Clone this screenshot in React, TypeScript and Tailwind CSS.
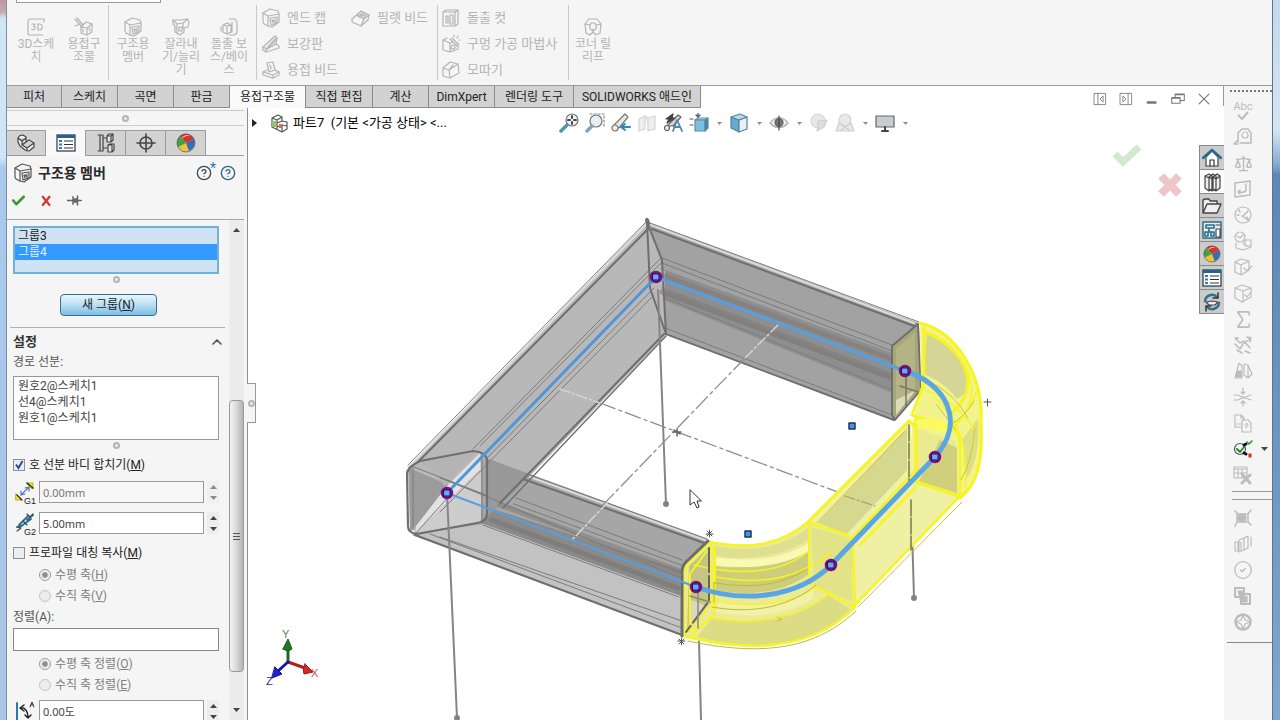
// App.tsx

import type { ReactNode } from "react";
import {
  ChevronUp,
  CircleCheck,
  CircleHelp,
  Scale,
  Sigma,
} from "lucide-react";
import clsx from "clsx";

const Svg = ({ size = 20, children }: { size?: number; children: ReactNode }) => (
  <svg
    width={size}
    height={size}
    viewBox="0 0 20 20"
    fill="none"
    stroke="currentColor"
    strokeWidth="1.2"
    strokeLinejoin="round"
    strokeLinecap="round"
    aria-hidden="true"
    className="shrink-0"
  >
    {children}
  </svg>
);

/* ---------- ribbon icons ---------- */

const Sketch3DIcon = () => (
  <Svg>
    <path d="M18 5v-3H4a2 2 0 0 0-2 2v12a2 2 0 0 0 2 2h13" />
    <path d="M6 7h3l-1.500 2.500c3 0 2 4-2 3M12 7v6h1.500c3.500 0 3.500-6 0-6z" />
  </Svg>
);

const TubeIcon = ({ size = 20 }: { size?: number }) => (
  <Svg size={size}>
    <path d="M2 5l7-4 8 2 1 3v8l-7 5-4-1-4-2-1-2z" />
    <path d="M2 5l5 3 11-2M7 8v10" />
    <path d="M9 10l7-1v6l-6 2zM11 12l1 3M14 11v4M12 12l2 2" />
  </Svg>
);

const WeldmentIcon = () => (
  <Svg>
    <path d="M1 2l7 8M3 1l6 7M1 9l5-2M7 10l5-5 6 2v8l-5 3-6-2z" />
    <path d="M7 10l6 1 5-4M13 11v7M9 12v3M15 11l1 3" />
  </Svg>
);

const TrimIcon = () => (
  <Svg>
    <path d="M2 3h8l6-1 2 3-1 5-4 1v4l-4 3-5-3V9L2 7z" />
    <path d="M2 3l4 4 6-1 5-4M6 7v9M12 6v5M8 10h3v4H8z" />
  </Svg>
);

const BossIcon = () => (
  <Svg>
    <path d="M10 2h6l2 3v11l-3 2h-5" />
    <path d="M4 8l4-2 4 2v7l-4 2-4-2zM4 8l4 1 4-1M8 9v8M2 10v4M13 5v10" />
  </Svg>
);

const WedgeIcon = () => (
  <Svg>
    <path d="M2 13L14 2l2 2-1 6 3 2v2L5 18l-3-2z" />
    <path d="M2 13l4 2 9-5M6 15l10-11M5 18v-3" />
    <path d="M6 13l8-9v5z" fill="currentColor" opacity="0.5" />
  </Svg>
);

const BeadIcon = () => (
  <Svg>
    <path d="M6 3l6-1 2 8-6 2zM2 12l4-2M8 12l6-2 4 2v3l-6 3-10-3v-3" />
    <path d="M2 12l10 3 6-3M12 15v3M9 5l1 4" />
  </Svg>
);

const FilletIcon = () => (
  <Svg>
    <path d="M1 11l9-8 8 4-1 5-7 6-9-4z" />
    <path d="M6 7l7 4 5-4M10 18l3-7M8 9c2-3 4-3 6-1" />
    <path d="M6 8l5-4 5 3-4 3z" fill="currentColor" opacity="0.5" />
  </Svg>
);

const CutIcon = () => (
  <Svg>
    <path d="M2 4l3-2h12v14l-3 2H2zM2 4h12l3-2M14 4v14" />
    <path d="M5 8h2v7H5zM9 7h3v9H9z" />
  </Svg>
);

const HoleIcon = () => (
  <Svg>
    <path d="M2 6l4-2M2 6v10l7 2 8-3V9M2 6l7 3v9M9 9l3-1" />
    <path d="M9 5l7 7M11 4l6 6M13 1v2M17 2l-1 2M18 6h1" />
    <circle cx="12" cy="13" r="2" />
  </Svg>
);

const ChamferIcon = () => (
  <Svg>
    <path d="M2 8l7-6 8 2 1 9-9 5-7-2zM2 8l6 2 9-6M8 10l1 8M8 10l4-5" />
  </Svg>
);

const CornerIcon = () => (
  <Svg>
    <path d="M6 2h8l4 5-1 9-4 2-3-3-3 3-4-2-1-9z" />
    <path d="M2 7l5 1 1-2h4l1 2 5-1M10 15v-3M7 8v4l3 2 3-2V8" />
  </Svg>
);

/* ---------- ribbon ---------- */

const BigButton = ({ icon, label }: { icon: ReactNode; label: string }) => (
  <button className="flex w-12 flex-col items-center gap-px pt-[17px]">
    {icon}
    <span className="whitespace-pre text-center text-[12px] leading-[13px]">{label}</span>
  </button>
);

const SmallButton = ({ icon, label }: { icon: ReactNode; label: string }) => (
  <button className="flex h-[26px] items-center gap-1.5 whitespace-nowrap text-[13px]">
    {icon}
    {label}
  </button>
);

const RibbonDivider = () => <div className="my-[5px] w-px shrink-0 bg-[#c9c9c9]" />;

const Ribbon = () => (
  <header className="relative h-[86px] shrink-0 border-b border-[#9a9a9a] bg-[#f5f5f5] text-[#b4b4b4]">
    <div className="absolute left-[9px] top-0 h-[3px] w-[145px] border-x border-b border-[#999] bg-white" />
    <div className="flex h-full">
      <div className="flex pl-[5px]">
        <BigButton icon={<Sketch3DIcon />} label={"3D스케\n치"} />
        <BigButton icon={<WeldmentIcon />} label={"용접구\n조물"} />
      </div>
      <RibbonDivider />
      <div className="flex pr-[3px]">
        <BigButton icon={<TubeIcon />} label={"구조용\n멤버"} />
        <BigButton icon={<TrimIcon />} label={"잘라내\n기/늘리\n기"} />
        <BigButton icon={<BossIcon />} label={"돌출 보\n스/베이\n스"} />
      </div>
      <RibbonDivider />
      <div className="grid w-[180px] grid-cols-[90px_90px] pl-1 pt-[5px]">
        <div>
          <SmallButton icon={<TubeIcon />} label="엔드 캡" />
          <SmallButton icon={<WedgeIcon />} label="보강판" />
          <SmallButton icon={<BeadIcon />} label="용접 비드" />
        </div>
        <div>
          <SmallButton icon={<FilletIcon />} label="필렛 비드" />
        </div>
      </div>
      <RibbonDivider />
      <div className="w-[130px] pl-[3px] pt-[5px]">
        <SmallButton icon={<CutIcon />} label="돌출 컷" />
        <SmallButton icon={<HoleIcon />} label="구멍 가공 마법사" />
        <SmallButton icon={<ChamferIcon />} label="모따기" />
      </div>
      <RibbonDivider />
      <BigButton icon={<CornerIcon />} label={"코너 릴\n리프"} />
    </div>
  </header>
);

/* ---------- command tabs + window buttons ---------- */

const TABS = [
  { label: "피처", width: "w-[55px]" },
  { label: "스케치", width: "w-[56px]" },
  { label: "곡면", width: "w-[56px]" },
  { label: "판금", width: "w-[56px]" },
  { label: "용접구조물", width: "w-[76px]", active: true },
  { label: "직접 편집", width: "w-[67px]" },
  { label: "계산", width: "w-[56px]" },
  { label: "DimXpert", width: "w-[66px]" },
  { label: "렌더링 도구", width: "w-[79px]" },
  { label: "SOLIDWORKS 애드인", width: "w-[127px]" },
];

const WINDOW_BUTTONS = [
  { name: "왼쪽 창", shape: <path d="M2 2h16v16H2zM7 2v16M14 6l-4 4 4 4z" /> },
  { name: "오른쪽 창", shape: <path d="M2 2h16v16H2zM13 2v16M6 6l4 4-4 4z" /> },
  { name: "최소화", shape: <path strokeWidth="3.500" d="M4 15h11" /> },
  { name: "복원", shape: <path strokeWidth="1.500" d="M1 8h12v8H1zM6 8V3h13v9h-6M6 4h13M1 9h12" /> },
  { name: "닫기", shape: <path d="M3 3l14 14M17 3L3 17" strokeWidth="1.500" /> },
];

const CommandTabs = () => (
  <nav className="flex h-[22px] shrink-0 bg-white">
    {TABS.map((tab) => (
      <button
        key={tab.label}
        className={clsx(
          "whitespace-nowrap border-r border-[#8c8c8c] text-center text-[12px] leading-5 text-[#222]",
          tab.width,
          tab.active ? "bg-[#fafafa]" : "border-b bg-[#d2d2d2]",
        )}
      >
        {tab.label}
      </button>
    ))}
    <div className="ml-auto flex h-5 items-end border-r border-[#999] pr-1.5 text-[#777]">
      {WINDOW_BUTTONS.map((button) => (
        <button key={button.name} aria-label={button.name} className="flex h-4 w-[26px] items-end justify-center">
          <Svg size={14}>{button.shape}</Svg>
        </button>
      ))}
    </div>
  </nav>
);

/* ---------- property manager ---------- */

const ColorBall = ({ size = 20 }: { size?: number }) => (
  <svg width={size} height={size} viewBox="0 0 20 20" aria-hidden="true">
    <circle cx="10" cy="10" r="9" fill="#f2c230" />
    <path d="M10 10L4 3a9 9 0 0 1 14 3z" fill="#d8322c" />
    <path d="M10 10l8-4a9 9 0 0 1-5 12z" fill="#2f6fc2" />
    <path d="M10 10L4 3a9 9 0 0 0-2 11z" fill="#3fa14a" />
    <path d="M5 6c2-4 7-5 9-3-3-1-6 1-9 3z" fill="#fff" opacity="0.7" />
    <circle cx="10" cy="10" r="9" fill="none" stroke="#555" strokeWidth="0.700" />
  </svg>
);

const PropertyListIcon = ({ size = 20 }: { size?: number }) => (
  <svg width={size} height={size} viewBox="0 0 20 20" fill="none" aria-hidden="true">
    <rect x="1" y="2" width="18" height="16" fill="#fff" stroke="#345" strokeWidth="1.300" />
    <path d="M1 3.500h18" stroke="#24648f" strokeWidth="3" />
    <path d="M3 8h3M3 11.500h3M3 15h3" stroke="#2a7bb0" strokeWidth="2" />
    <path d="M8 8h9M8 11.500h9M8 15h9" stroke="#333" strokeWidth="1.200" />
  </svg>
);

const PANEL_TABS = [
  {
    name: "디자인 트리",
    icon: (
      <Svg>
        <path
          d="M2 5q1-3 5-3l3 2v5l3-2 5 3v4l-5 4-4-1-5-4-2-4zM2 5l4 3 4-3M6 8v4l5 3 7-5M11 15v3M6 12l4-3"
          fill="#eee"
        />
      </Svg>
    ),
  },
  { name: "속성", icon: <PropertyListIcon /> },
  {
    name: "설정",
    icon: (
      <Svg>
        <path d="M2 2h5M4 2v16M2 18h5M7 2v16M7 5h4M7 15h4" />
        <path d="M11 3l2-2h4v6l-2 2h-4zM11 3h4v6M15 3l2-2M12 12l2-1h4v6l-2 2h-4zM12 12h4v7" fill="#e5e5e5" />
      </Svg>
    ),
  },
  {
    name: "치수",
    icon: (
      <Svg>
        <circle cx="10" cy="10" r="6" strokeWidth="1.600" />
        <path strokeWidth="1.600" d="M10 1v18M1 10h18" />
      </Svg>
    ),
  },
  { name: "표시", icon: <ColorBall /> },
];

const Knob = () => (
  <span className="h-[7px] w-[7px] rounded-full border-2 border-[#b5b5b5] bg-[#eee]" />
);

const KnobRow = () => (
  <div className="flex h-2.5 w-[206px] items-center justify-center">
    <Knob />
  </div>
);

const Tri = ({ down = false }: { down?: boolean }) => (
  <svg width="7" height="4" viewBox="0 0 7 4" aria-hidden="true">
    <path d={down ? "M0 0h7L3.500 4z" : "M0 4h7L3.500 0z"} fill="#444" />
  </svg>
);

const Gap1Icon = () => (
  <Svg>
    <path d="M6 13l8-8M6 13v-4M6 13l4-1M14 5v4M14 5l-4 1" stroke="#5578b8" />
    <path d="M12 1h6v6h-1l-5-5zM1 12l6 6H1z" fill="#f5e52a" stroke="#a89b10" strokeWidth="0.800" />
    <path d="M2 13l5 5M12 1l6 5" stroke="#222" />
  </Svg>
);

const Gap2Icon = () => (
  <Svg>
    <path d="M4 12l9-9M5 14l11-8M2 14l6-2M12 7l6-5" stroke="#22708f" strokeWidth="1.800" />
    <path d="M2 18l4-3-4-1M12 1l3 3 3-3M8 8l4 4" stroke="#444" />
  </Svg>
);

const AngleIcon = () => (
  <Svg>
    <path d="M2 2v17" stroke="#2879ad" strokeWidth="2" />
    <path d="M5 7c6-1 8 4 8 10M5 7l4-3M5 7l4 3M13 17l-3-3M13 17l3-3" stroke="#222" strokeWidth="1.500" />
    <path d="M15 6l2-5 2 5M16 4h2" stroke="#222" strokeWidth="0.900" />
  </Svg>
);

const FieldRow = (props: { icon: ReactNode; tag?: string; label: string; value: string; disabled?: boolean }) => (
  <div className="flex h-[22px] items-center">
    <span className="relative mr-[3px] flex w-[23px] justify-center">
      {props.icon}
      {props.tag && (
        <span className="absolute -bottom-1 right-0 font-['Liberation_Sans',sans-serif] text-[9px] leading-none text-[#222]">
          {props.tag}
        </span>
      )}
    </span>
    <input
      aria-label={props.label}
      defaultValue={props.value}
      disabled={props.disabled}
      className="h-full w-[165px] border border-[#999] bg-white px-[3px] font-['Noto_Sans','Noto_Sans_CJK_KR',sans-serif] text-[11px] text-[#444] disabled:bg-[#f7f7f7] disabled:text-[#777]"
    />
    <span className={clsx("ml-[3px] flex h-full w-3 flex-col bg-[#ededed]", props.disabled && "opacity-60")}>
      <button aria-label="증가" className="flex flex-1 items-center justify-center"><Tri /></button>
      <button aria-label="감소" className="flex flex-1 items-center justify-center"><Tri down /></button>
    </span>
  </div>
);

const Check = ({ label, hotkey, checked }: { label: string; hotkey: string; checked?: boolean }) => (
  <label className="flex h-full items-center gap-1 text-[12px] text-[#222]">
    <span className="relative h-3 w-3">
      <input
        type="checkbox"
        defaultChecked={checked}
        className="peer block h-3 w-3 appearance-none border border-[#8e8f8f] bg-[#e9ecf2]"
      />
      <svg
        viewBox="0 0 12 12"
        className="pointer-events-none absolute inset-0 hidden h-3 w-3 peer-checked:block"
        aria-hidden="true"
      >
        <path d="M3 5.500l2.500 3.500L9.500 2" fill="none" stroke="#33498f" strokeWidth="2" />
      </svg>
    </span>
    <span>{label}(<u>{hotkey}</u>)</span>
  </label>
);

const Radio = (props: { name: string; label: string; hotkey: string; checked?: boolean }) => (
  <label className="flex h-[21px] items-center gap-1 pl-[26px] text-[12px] text-[#808080]">
    <input
      type="radio"
      name={props.name}
      defaultChecked={props.checked}
      className="h-3 w-3 appearance-none rounded-full border border-[#c4c4c4] bg-[#ededed] checked:border-[#999] checked:bg-[radial-gradient(circle,#8c8c8c_0_2px,#cfcfcf_3px,#f4f4f4_4px)]"
    />
    <span>{props.label}(<u>{props.hotkey}</u>)</span>
  </label>
);

const PropertyManager = () => (
  <aside className="relative z-10 flex w-[241px] shrink-0 flex-col border-r border-[#8f8f8f] bg-[#f5f5f5]">
    <div className="mr-[3px] mt-0.5 flex h-4 items-center justify-center border-y border-[#ccc]">
      <Knob />
    </div>
    <div className="mt-1 flex h-[26px] pr-[3px]">
      {PANEL_TABS.map((tab, i) => (
        <button
          key={tab.name}
          aria-label={tab.name}
          className={clsx(
            "flex items-center justify-center border-r border-[#9c9c9c] text-[#444]",
            i === 0 ? "w-[39px]" : "w-10",
            i === 1 ? "bg-[#f9f9f9]" : "border-y bg-[#d2d2d2]",
          )}
        >
          {tab.icon}
        </button>
      ))}
      <div className="flex-1 border-b border-[#9c9c9c]" />
    </div>

    <div className="flex h-[34px] items-center pl-1.5 pr-[11px]">
      <span className="text-[#555]"><TubeIcon /></span>
      <h1 className="ml-[5px] flex-1 text-[14px] font-bold text-[#2a2a2a]">구조용 멤버</h1>
      <button aria-label="새 기능 도움말" className="relative mr-2 text-[#3c4a55]">
        <CircleHelp size={16} strokeWidth={2} />
        <span className="absolute -right-1 -top-1 text-[14px] leading-none text-[#1f78b5]">*</span>
      </button>
      <button aria-label="도움말" className="text-[#2d6687]">
        <CircleHelp size={16} strokeWidth={2} />
      </button>
    </div>

    <div className="mr-[3px] flex h-[30px] gap-3 border-b border-[#a5a5a5] pl-1">
      <button aria-label="확인" className="h-5 w-4">
        <Svg size={15}><path d="M3 10l4 5L17 5" stroke="#3d9a35" strokeWidth="3.500" /></Svg>
      </button>
      <button aria-label="취소" className="h-5 w-4">
        <Svg size={15}><path d="M5 5l9 11M14 5L5 16" stroke="#d23a2c" strokeWidth="3" /></Svg>
      </button>
      <button aria-label="고정" className="h-5 w-4 text-[#666]">
        <Svg size={15}><path strokeWidth="2" d="M0 10h8M8 5v10M8 10h6M14 4v12M14 10h5M10 8h3v4h-3z" /></Svg>
      </button>
    </div>

    <div className="flex min-h-0 flex-1">
      <div className="min-w-0 flex-1 overflow-hidden pl-1.5 pt-1.5 text-[12px] text-[#444]">
        <ul className="h-12 w-[206px] border-2 border-[#6fb1dc] bg-[#cfe3f4] leading-4 text-[#222]">
          <li className="px-[3px]">그룹3</li>
          <li className="bg-[#3399ff] px-[3px] text-[#e4f2ff]">그룹4</li>
        </ul>
        <KnobRow />
        <button className="ml-[47px] mt-2.5 block h-[22px] w-[97px] rounded-sm border border-[#3c6c8c] bg-linear-to-b from-[#e8f5fc] via-[#b9dff3] to-[#78bfe6] text-[#222]">
          새 그룹(<u>N</u>)
        </button>

        <section className="-ml-[3px] mt-[11px] w-[215px] border-t border-[#b0b0b0] pl-[3px]">
          <div className="flex h-7 items-center justify-between">
            <h2 className="text-[13px] font-bold text-[#333]">설정</h2>
            <ChevronUp size={16} strokeWidth={2.5} className="text-[#555]" />
          </div>
          <p className="leading-[13px] text-[#555]">경로 선분:</p>
          <ul className="mt-[7px] h-16 w-[206px] border border-[#999] bg-white pt-px leading-4">
            <li className="pl-1">원호2@스케치1</li>
            <li className="pl-1">선4@스케치1</li>
            <li className="pl-1">원호1@스케치1</li>
          </ul>
          <KnobRow />

          <div className="h-[30px]"><Check label="호 선분 바디 합치기" hotkey="M" checked /></div>
          <div className="mt-px flex flex-col gap-[9px]">
            <FieldRow icon={<Gap1Icon />} tag="G1" label="간격 1" value="0.00mm" disabled />
            <FieldRow icon={<Gap2Icon />} tag="G2" label="간격 2" value="5.00mm" />
          </div>
          <div className="mt-[7px] h-[23px]"><Check label="프로파일 대칭 복사" hotkey="M" /></div>
          <Radio name="mirror" label="수평 축" hotkey="H" checked />
          <Radio name="mirror" label="수직 축" hotkey="V" />
          <label htmlFor="align" className="flex h-[22px] items-center text-[#555]">정렬(A):</label>
          <input id="align" className="block h-[23px] w-[206px] border border-[#888] bg-white px-1" />
          <div className="mb-[5px] mt-0.5">
            <Radio name="align-axis" label="수평 축 정렬" hotkey="O" checked />
            <Radio name="align-axis" label="수직 축 정렬" hotkey="E" />
          </div>
          <FieldRow icon={<AngleIcon />} label="각도" value="0.00도" />
        </section>
      </div>

      <div className="mr-[3px] flex w-[15px] flex-col items-center bg-[#ececec]">
        <button aria-label="위로" className="flex h-5 items-center"><Tri /></button>
        <div className="flex-[161]" />
        <div className="flex w-full flex-[272] flex-col items-center justify-center gap-0.5 rounded-sm border border-[#999] bg-linear-to-r from-[#f4f4f4] via-[#d8d8d8] to-[#b4b4b4]">
          <span className="h-px w-[7px] bg-[#555]" />
          <span className="h-px w-[7px] bg-[#555]" />
          <span className="h-px w-[7px] bg-[#555]" />
        </div>
        <div className="flex-[28]" />
        <button aria-label="아래로" className="flex h-5 items-center"><Tri down /></button>
      </div>
    </div>

    <button
      aria-label="패널 접기"
      className="absolute -right-[9px] top-[275px] flex h-10 w-[9px] items-center justify-center border border-l-0 border-[#999] bg-[#f5f5f5]"
    >
      <Knob />
    </button>
  </aside>
);

/* ---------- heads-up toolbar ---------- */

const HUD: { name: string; icon: ReactNode; menu?: boolean }[] = [
  {
    name: "전체 보기",
    icon: (
      <>
        <circle cx="13" cy="7" r="6" fill="#eef4f7" stroke="#777" />
        <path d="M13 3v2M13 9v2M9 7h2M15 7h2" stroke="#444" strokeWidth="2" />
        <path d="M8 12l-6 6" stroke="#5393b8" strokeWidth="3.500" />
      </>
    ),
  },
  {
    name: "영역 확대",
    icon: (
      <>
        <path d="M5 1h14v14" stroke="#888" strokeDasharray="2 2" />
        <circle cx="11" cy="8" r="6" fill="#e9eef2" stroke="#777" />
        <path d="M7 13l-5 5" stroke="#7aa9c4" strokeWidth="3.500" />
      </>
    ),
  },
  {
    name: "이전 뷰",
    icon: (
      <>
        <path d="M3 12L14 1l3 3L8 15z" fill="#e8e8e8" stroke="#777" />
        <circle cx="4" cy="15" r="3" fill="#f3efdc" stroke="#777" />
        <path d="M19 14h-8M14 11l-4 3 4 3" stroke="#2f86b8" strokeWidth="2" />
      </>
    ),
  },
  {
    name: "단면도",
    icon: <path d="M2 6l6-3v13l-6 2zM8 3l3 2v10M11 5l7-2v13l-7 2z" fill="#eee" stroke="#d4d4d4" />,
  },
  {
    name: "동적 주석 뷰",
    icon: (
      <>
        <path d="M4 13L15 2l3 2-8 9z" fill="#d7d7d7" stroke="#666" />
        <path d="M3 6l7-5-1 4 3 0-8 5 2-4z" fill="#444" stroke="#444" />
        <circle cx="4" cy="15" r="2.500" fill="#eee" stroke="#666" />
        <path d="M10 18l4-11 5 11M11 14h6" stroke="#4d87a8" strokeWidth="1.800" />
      </>
    ),
  },
  {
    name: "뷰 방향",
    menu: true,
    icon: (
      <>
        <path d="M6 7l3-2h10l-3 2z" fill="#bfe2f2" stroke="#5c8ba5" />
        <path d="M6 7h10v11H6z" fill="#7cc0e0" stroke="#5c8ba5" />
        <path d="M16 7l3-2v10l-3 3z" fill="#3f86ab" stroke="#5c8ba5" />
        <path d="M1 6h3M1 12h3M9 0v3M7 2l2 2 2-2" stroke="#555" />
      </>
    ),
  },
  {
    name: "표시 유형",
    menu: true,
    icon: (
      <>
        <path d="M2 4l8 3v12l-8-4z" fill="#62acd1" stroke="#5a8299" />
        <path d="M10 7l8-3v12l-8 3z" fill="#e6f2f8" stroke="#5a8299" />
        <path d="M2 4l9-3 7 3-8 3z" fill="#b5daeb" stroke="#5a8299" />
      </>
    ),
  },
  {
    name: "숨기기/보이기",
    menu: true,
    icon: (
      <>
        <path d="M1 10c5-7 13-7 18 0-5 6-13 6-18 0z" fill="#ededed" stroke="#aaa" />
        <circle cx="10" cy="9.500" r="4" fill="#777" stroke="#666" />
        <path d="M10 3v14" stroke="#444" />
      </>
    ),
  },
  {
    name: "표현 편집",
    icon: (
      <>
        <circle cx="9" cy="8" r="7" fill="#e8e8e8" stroke="#d6d6d6" />
        <path d="M9 8l9-1-3 7-7 4 1-4z" fill="#ddd" stroke="#cfcfcf" />
      </>
    ),
  },
  {
    name: "화면 적용",
    menu: true,
    icon: (
      <>
        <circle cx="10" cy="7" r="6" fill="#e8e8e8" stroke="#d6d6d6" />
        <path d="M1 18l3-8 6 4 6-4 3 8zM5 18l5-4 5 4" fill="#e8e8e8" stroke="#cfcfcf" />
      </>
    ),
  },
  {
    name: "뷰 설정",
    menu: true,
    icon: (
      <>
        <path d="M1 3h18v11H1z" fill="#c9cdd0" stroke="#666" />
        <path d="M10 14v3M7 18h6" stroke="#444" strokeWidth="2" />
      </>
    ),
  },
];

const ViewportBar = () => (
  <div className="relative flex h-[30px] items-center">
    <div className="flex w-[308px] shrink-0 items-center pl-1">
      <svg width="6" height="8" viewBox="0 0 6 8" aria-hidden="true"><path d="M0 0l5 4-5 4z" fill="#222" /></svg>
      <span className="ml-3 mr-[3px] text-[#555]">
        <Svg>
          <path d="M2 5l6-3 4 2v4l5 1v7l-5 3-4-2-6-3zM2 5l5 2 5-3M7 7v9M12 8l-5 2M7 14l5-2 5 1M12 12v7" />
          <path d="M2 8h4v6H2z" fill="#8fc46a" stroke="none" />
          <path d="M9 11h3v4H9z" fill="#d76a52" stroke="none" />
        </Svg>
      </span>
      <span className="whitespace-pre text-[13px] text-black">{"파트7  (기본 <가공 상태> <..."}</span>
    </div>
    {HUD.map((item) => (
      <div key={item.name} className="flex shrink-0 items-center">
        <button aria-label={item.name} className="flex w-[26px] justify-center">
          <Svg>{item.icon}</Svg>
        </button>
        {item.menu && (
          <button aria-label={`${item.name} 메뉴`} className="flex w-3.5 justify-center opacity-60">
            <svg width="5" height="3" viewBox="0 0 5 3" aria-hidden="true"><path d="M0 0h5L2.500 3z" fill="#444" /></svg>
          </button>
        )}
      </div>
    ))}
  </div>
);

/* ---------- model ---------- */

const NODES = [[656, 277], [905, 371], [935, 457], [831, 565], [696, 587], [447, 493]];
const HANDLES = [[852, 426], [748, 534]];

const Model = () => (
  <svg
    viewBox="248 108 976 612"
    preserveAspectRatio="xMinYMin slice"
    className="absolute inset-0 h-full w-full"
    fill="none"
    strokeLinejoin="round"
    strokeLinecap="round"
    role="img"
    aria-label="구조용 멤버 모델"
  >
    {/* left beam */}
    <path d="M647 222L408 467l2 64 68-7 22-17L667 334l-5-74z" fill="#b8b8b8" />

    {/* bottom beam */}
    <path d="M486 458L708 539l-25 28v68L412 535l35-42z" fill="#a6a6a6" />
    <path d="M490 508l190 62v26l-198-72z" fill="#8a8a8a" />
    <path d="M484 524l197 72v38L415 534z" fill="#c2c2c2" />
    <path d="M486 458l45 17-35 34-10 8z" fill="#999" />

    {/* left corner */}
    <path d="M409 468l40 17v12l-39 34z" fill="#9b9b9b" />
    <path d="M447 497l34-35v60l-66 11z" fill="#cdcdcd" />
    <path d="M447 486l33-33v16l-64 63v-6z" fill="#e2e2e2" />
    <path d="M421 461l55-9-31 34z" fill="#b4b4b4" />

    {/* top beam */}
    <path d="M647 222l272 101 2 67-26 30-229-87-5-74z" fill="#a2a2a2" />
    <path d="M660 268l232 85v40L664 300z" fill="#8e8e8e" />
    <path d="M650 265l15 6v60l-12-35z" fill="#b9b9b9" />

    <g stroke="#dadada" strokeWidth="2">
      <path d="M646 225L412 464M651 225l263 98M530 477l175 63" />
    </g>
    <g stroke="#7c7c7c">
      <path d="M647 221L408 465M662 257L473 449M662 262L480 446M654 288L487 458M654 295L440 512" />
      <path d="M650 223l269 99M662 258l230 87M662 263l230 88M662 288l230 86M665 298l227 92M665 328l227 87" />
      <path d="M527 474l180 65M516 498l166 62M514 504l167 61M447 480l234 98M483 525l196 72M414 467l72 28M440 478l46 18M430 534l252 94M440 537l242 84" />
      <path d="M413 467v62M482 456v66M450 495l-34 38" />
    </g>
    <g stroke="#6f6f6f" strokeWidth="2">
      <path d="M648 229L418 462M664 334L500 503M652 229l262 97M666 334l228 86M523 479l181 64M415 535l267 100" />
      <path d="M666 336L503 508" strokeWidth="1.500" />
      <path d="M647 222l3 66 16 46M647 222l15 38 4 74" />
      <path d="M420 461l53-10q13 1 14 9v54q-1 8-10 9l-60 11q-9-1-9-8l-1-53q1-6 13-12z" strokeWidth="2.200" />
      <path d="M648 223l-1-3" strokeWidth="4" />
    </g>

    {/* streaks next to the path */}
    <path d="M662 275l230 84M500 505l180 66" stroke="#7c756f" strokeWidth="5" opacity="0.500" />
    <path d="M662 292l230 86M492 520l186 68" stroke="#76706a" strokeWidth="5" opacity="0.500" />

    {/* posts */}
    <g stroke="#858585" strokeWidth="2">
      <path d="M658 290l8 214M447 493l10 225M698 600l3 120M909 425l5 173" />
      <circle cx="666" cy="504" r="2" fill="#777" />
      <circle cx="457" cy="718" r="2" fill="#777" />
      <circle cx="914" cy="598" r="2" fill="#777" />
    </g>

    {/* centre lines */}
    <path d="M600 403l275 103M745 358L600 508" stroke="#8e8e8e" strokeWidth="1.300" strokeDasharray="16 4 3 4" />
    <path d="M560 389l40 14M778 325l-33 33M608 502l-36 38" stroke="#d5d5d5" strokeWidth="1.500" strokeDasharray="10 3 2 3" />
    <path d="M673 432h8M677 429v7M674 430l6 4" stroke="#666" strokeWidth="1.500" />

    {/* end profile of the top beam */}
    <path d="M892 346l26-22 3 66-26 30-3-5z" fill="#a6a67c" stroke="#6c6c6c" strokeWidth="1.800" />
    <path d="M896 349l19-17v57l-19 25z" fill="#b3b383" />
    <path d="M896 400l20-10-20 25z" fill="#dcdcb4" />
    <path d="M906 374v32M900 386l18 6" stroke="#77776a" strokeWidth="1.500" />

    {/* right bend */}
    <path d="M920 323c38 9 64 55 62 100 2 37-4 61-22 76l-48-15V425l9-35z" fill="#f3f38e" />
    <path d="M927 334c25 8 41 30 41 48 0 9-5 14-11 17-8-11-20-20-34-25z" fill="#d5d596" />
    <path d="M914 428l42 13 3 54-43-14z" fill="#eaea92" />
    <path d="M940 440l17 8v45l-38-12z" fill="#cfcf7c" />
    <path d="M962 440l16-22q3 40-12 62z" fill="#dede84" />
    <g stroke="#f7f520" strokeWidth="3">
      <path d="M920 323c38 9 64 55 61 100 2 37-3 61-21 75" />
      <path d="M924 328v55l-12 32M925 332c24 8 43 30 43 52q-1 15-16 29" />
      <path d="M912 415l43 15q5 5 5 18v50l-44-16v-64" strokeWidth="2.500" />
      <path d="M930 335c30 14 45 40 41 63q-4 18-18 30M925 390c22 7 40 24 49 40M977 390q-8 24-28 40M935 398q36 30 30 90" strokeWidth="1.500" />
    </g>
    <path d="M926 380q28 12 42 38M950 425q15-8 24-24M975 428q-3 34-14 52M936 404l20 26" stroke="#c9c744" />
    <path d="M915 422c18-8 34-3 38 12l-32-7z" fill="#fbfb60" />

    {/* straight yellow run */}
    <path d="M808 523l102-104 6 62 44 16-106 110-44-20z" fill="#f0f0a4" />
    <path d="M818 523l89-95v42l-60 64z" fill="#d7d890" />
    <path d="M811 528l41 12v62l-38-17z" fill="#dcdc84" />
    <path d="M808 522L909 421l7 6v55l42 14" stroke="#f7f520" strokeWidth="3" />
    <path d="M958 498L855 605M853 537l62-66M860 545l56-58" stroke="#f7f520" strokeWidth="2.500" />
    <path d="M962 502L858 607M813 527L904 432" stroke="#c9c52e" />
    <path d="M845 496l30 10" stroke="#a5a578" strokeWidth="1.300" strokeDasharray="10 3 2 3" />
    <path d="M909 425v60M911 500v50" stroke="#77774a" strokeWidth="1.500" strokeDasharray="16 2" />

    {/* lower bend */}
    <path d="M709 542c42 7 71 2 99-20l44 15 3 70c-42 44-106 47-171 30v-70z" fill="#eaea98" />
    <path d="M714 546c40 6 68 2 94-18v12c-26 16-60 21-94 16z" fill="#dfdf90" />
    <path d="M714 566c42 4 72-2 95-16v24c-27 20-60 22-95 16z" fill="#cdcd7c" />
    <path d="M714 557c40 6 70 1 95-14v8c-24 15-60 19-95 14z" fill="#f9f9b4" />
    <path d="M720 600c50 10 76 3 94-14l-1 12c-24 18-60 21-98 14z" fill="#f1f1a8" />
    <path d="M712 618c50 9 88 0 116-23l22 14c-40 40-98 42-153 28z" fill="#dcdc84" />
    <path d="M811 527l41 12v63l-38-17z" fill="#dede80" opacity="0.700" />
    <path d="M689 566l21-20v57l-23 30z" fill="#c4c484" />
    <path d="M691 600l17 6-20 26z" fill="#d9d9c0" />
    <g stroke="#f7f520" strokeWidth="2.500">
      <path d="M709 542c42 8 71 3 99-20l37 12q7 3 8 11l2 62c-42 43-104 46-171 29" />
      <path d="M709 543l-20 19q-5 6-5 14v60l6 1 23-22q2-2 2-8v-57zM712 549v54l-22 28v-57l16-22z" strokeWidth="2" />
      <path d="M809 523v52q0 8 7 12l37 19" strokeWidth="2" />
      <path d="M694 565c50 12 90 7 116-15M716 577c50 9 85 0 115-25M712 600c46 10 84 3 104-14M712 618c50 9 90-4 120-26" strokeWidth="1.500" />
    </g>
    <path d="M715 583c40 6 66 2 92-14M688 641c66 14 124 12 168-30M712 607c44 8 80-2 104-22M714 582v20" stroke="#bdb93a" />
    <path d="M709 548v53l-23 31" stroke="#66665c" strokeWidth="2" strokeDasharray="24 4" />
    <path d="M698 592v36M690 596l20 6" stroke="#8a8a78" strokeWidth="1.500" />
    <path d="M708 541l-22 21q-4 4-4 10v64" stroke="#6c6c6c" strokeWidth="3" />

    {/* sketch path */}
    <path d="M656 277L447 493" stroke="#4f96d8" strokeWidth="3" />
    <path d="M447 493l249 94" stroke="#559fe2" strokeWidth="2" />
    <path d="M656 277l249 94" stroke="#559fe2" strokeWidth="3" />
    <path d="M905 371c40 12 62 50 30 86L831 565c-34 34-90 38-135 22" stroke="#5aa6e4" strokeWidth="5" />

    {NODES.map(([x, y]) => (
      <g key={`${x}-${y}`}>
        <circle cx={x} cy={y} r="5" fill="#8a4aa0" stroke="#7d0a80" strokeWidth="2.500" />
        <rect x={x - 3} y={y - 3} width="6" height="6" fill="#6aa8ff" stroke="#15154f" />
      </g>
    ))}
    {HANDLES.map(([x, y]) => (
      <rect key={x} x={x - 3} y={y - 3} width="6" height="6" fill="#4c94d8" stroke="#17365c" strokeWidth="1.500" />
    ))}

    <g stroke="#555">
      <path d="M984 402h7M987.500 399v7" />
      <path d="M706 534h7M709.500 530v7M707 531l5 5M712 531l-5 5M678 641h7M681.500 638v7M679 639l5 5M684 639l-5 5" />
      <path d="M777 617l5 2-5 2" stroke="#c9c52e" />
    </g>

    {/* cursor */}
    <path d="M690 490v15l4-3 3 6 2-1-2-6h4z" fill="#fff" stroke="#333" />

    {/* triad */}
    <path d="M288 662v-14" stroke="#1d6b22" strokeWidth="3" />
    <path d="M283 649l5-10 4 10q-4 3-9 0z" fill="#1b7a22" stroke="#155a1a" />
    <path d="M288 662l17 6" stroke="#b01f1f" strokeWidth="3" />
    <path d="M305 664l8 8-9 2q-2-5 1-10z" fill="#d02a2a" stroke="#991c1c" />
    <path d="M288 662l-10 9" stroke="#1717a8" strokeWidth="3" />
    <path d="M275 667l7 7-10 4z" fill="#2020cc" stroke="#13138c" />
    <g fontFamily="Liberation Sans, sans-serif" fontSize="11">
      <text x="282" y="638" fill="#4b8f50">Y</text>
      <text x="311" y="677" fill="#d05050">X</text>
      <text x="266" y="685" fill="#2a2a9c">Z</text>
    </g>
  </svg>
);

/* ---------- task pane ---------- */

const TASKS: { name: string; icon: ReactNode }[] = [
  {
    name: "홈",
    icon: (
      <Svg>
        <path d="M4 9v9h12V9l-6-6z" fill="#fff" stroke="#444" />
        <path d="M1 10l9-8 9 8" stroke="#276c90" strokeWidth="2.500" />
        <path d="M8 18v-6h4v6" stroke="#333" />
      </Svg>
    ),
  },
  {
    name: "라이브러리",
    icon: (
      <Svg>
        <path
          d="M3 4l4-2 3 2v13l-3 2-4-3zM7 5l4-3 3 2v13l-4 2-3-2zM11 5l4-3 3 2v12l-4 3-3-2zM3 4l4 2v13M7 5l3 2v12M11 5l3 2v12M14 7l4-3"
          fill="#eee"
          stroke="#444"
        />
      </Svg>
    ),
  },
  {
    name: "파일 탐색기",
    icon: (
      <Svg>
        <path d="M1 17V4l2-1h4l1 2h7v3M1 17L5 8h14l-4 9z" fill="#f0f0f0" stroke="#444" strokeWidth="1.400" />
      </Svg>
    ),
  },
  {
    name: "뷰 팔레트",
    icon: (
      <Svg>
        <path d="M1 2h18v16H1z" fill="#e3edf2" stroke="#356a85" strokeWidth="1.500" />
        <path d="M4 5h8v3H4zM7 8v3M3 12h3v4H3zM9 12h3v4H9zM3 12h9" stroke="#2a6b8f" strokeWidth="1.600" />
        <path d="M14 9h4v8h-4zM14 5h4" fill="#fff" stroke="#444" />
      </Svg>
    ),
  },
  { name: "표현", icon: <ColorBall size={18} /> },
  { name: "사용자 정의 속성", icon: <PropertyListIcon /> },
  {
    name: "포럼",
    icon: (
      <Svg>
        <path d="M3 9a7 7 0 0 1 12-4M17 11a7 7 0 0 1-12 4" stroke="#356f8f" strokeWidth="2.500" />
        <path d="M16 1v5h-5M4 19v-5h5" stroke="#333" strokeWidth="1.500" />
        <path d="M4 10l6-1 6 1-3 3H7z" fill="#eee" stroke="#444" />
      </Svg>
    ),
  },
];

const TaskPane = () => (
  <div className="relative ml-auto mt-[7px] flex w-[25px] flex-col border-l border-t border-[#8a8a8a]">
    {TASKS.map((task, i) => (
      <button
        key={task.name}
        aria-label={task.name}
        className={clsx(
          "flex h-6 items-center justify-center border-b border-[#8a8a8a]",
          i === 1 ? "bg-white" : "bg-[#cbcbcb]",
        )}
      >
        {task.icon}
      </button>
    ))}
  </div>
);

const Viewport = () => (
  <main className="relative min-w-0 flex-1 overflow-hidden bg-white">
    <Model />
    <ViewportBar />
    <TaskPane />
    <button aria-label="확인" className="absolute right-[82px] top-[34px]">
      <svg width="30" height="26" viewBox="0 0 30 26" aria-hidden="true">
        <path d="M3 12l8 8L27 5" fill="none" stroke="#d3e8cd" strokeWidth="7" />
      </svg>
    </button>
    <button aria-label="취소" className="absolute right-[41px] top-16">
      <svg width="26" height="26" viewBox="0 0 26 26" aria-hidden="true">
        <path d="M4 4l18 18M22 4L4 22" fill="none" stroke="#eec6c8" strokeWidth="8" />
      </svg>
    </button>
  </main>
);

/* ---------- tools on the right edge ---------- */

const TOOLS: { name: string; icon: ReactNode; menu?: boolean }[] = [
  {
    name: "맞춤법 검사",
    icon: (
      <span className="flex flex-col items-center text-[11px] leading-[9px]">
        Abc
        <svg width="12" height="9" viewBox="0 0 12 9" aria-hidden="true">
          <path d="M1 4l4 4 6-7" fill="none" stroke="currentColor" strokeWidth="2" />
        </svg>
      </span>
    ),
  },
  { name: "측정", icon: <Svg><circle cx="12" cy="8" r="3" /><path d="M5 15V6l4-4h6l3 4v10H7M5 13l-4 4h4" strokeWidth="1.500" /></Svg> },
  { name: "물성치", icon: <Scale size={19} strokeWidth={1.8} /> },
  { name: "단면 속성", icon: <Svg><path d="M2 4l15-2v14L2 18zM13 5v6q-1 3-6 2M7 11l-2 2 2 2" strokeWidth="1.500" /></Svg> },
  { name: "센서", icon: <Svg><circle cx="10" cy="10" r="8" /><path d="M10 11l5-5M9 11l6 4M4 10h2M6 5l1 2M14 12l2 4" strokeWidth="1.500" /></Svg> },
  { name: "성능 평가", icon: <Svg><circle cx="7" cy="6" r="5" /><path d="M4 5l3 2 3-3M3 12v5l7 2 8-3v-6M10 12l4 3M12 9h6v6h-6z" /></Svg> },
  { name: "확인", icon: <Svg><path d="M2 5l6-3 8 2v9l-8 5-6-3zM2 5l6 3 8-4M8 8v10M11 11l3 3 5-5" /></Svg> },
  { name: "형상 분석", icon: <Svg><path d="M2 5l7-3 9 3v9l-9 5-7-4zM2 5l8 3 8-3M10 8v11M12 12l2 2 3-4" /></Svg> },
  { name: "수식", icon: <Sigma size={23} strokeWidth={1.8} /> },
  { name: "편차 분석", icon: <Svg><path d="M2 3l5 5 4-2 6 7M2 9l5 5 3-5 8-6M2 3h3M14 2l4 1-1 4M12 16l5 2M4 15l5 3" strokeWidth="1.500" /></Svg> },
  { name: "구배 분석", icon: <Svg><path d="M2 17L6 2l3 3v12zM11 3l4 1 4 9-4 4-4-3zM15 4v13" /><path d="M4 10h4v6H3z" fill="currentColor" /></Svg> },
  { name: "대칭 확인", icon: <Svg><path d="M1 8h4l4 2h3l6-2M1 13h4l4-2h3l6 2M10 1v6M8 5l2 2 2-2M10 19v-5M8 16l2-2 2 2" /></Svg> },
  {
    name: "문서 비교",
    icon: (
      <Svg>
        <path d="M2 2h6l3 3v2M2 2v12h6M8 2v3h3M4 11h4" />
        <path d="M9 7h6l3 3v9H9z" />
        <path d="M12 12q2-3 3 0 0 1-2 2v1" />
      </Svg>
    ),
  },
  {
    name: "활성 확인",
    menu: true,
    icon: (
      <Svg>
        <circle cx="7" cy="10" r="5.500" stroke="#555" />
        <path d="M4 10l3 3 4-5" stroke="#2d8a34" strokeWidth="2" />
        <path d="M11 6l2-1M11 14l2 1" stroke="#111" strokeWidth="3" />
        <path d="M14 3l2 2 3-3" stroke="#2d8a34" strokeWidth="1.500" />
        <path d="M16 15h2v3h-2z" fill="#c93a30" stroke="#c93a30" />
      </Svg>
    ),
  },
  {
    name: "설계표",
    icon: (
      <Svg>
        <path d="M1 2h13v11H1zM1 4h13M1 8h13M5 4v9M9 4v9" />
        <path d="M9 9l8 9M17 10l-8 8" strokeWidth="3" />
      </Svg>
    ),
  },
];

const STUDY_TOOLS: { name: string; icon: ReactNode }[] = [
  { name: "해석", icon: <Svg><path d="M2 3l3 3h10l3-4M4 6v8l-2 4M4 14h11l3 3M15 6v8" strokeWidth="1.500" /><circle cx="9" cy="10" r="4" fill="currentColor" /></Svg> },
  { name: "유동", icon: <Svg><path d="M2 8h3v9H2zM6 6l5-2v12l-5 2zM11 4l4-2v12l-4 2M18 3v9M8 8v8" /></Svg> },
  { name: "검증", icon: <CircleCheck size={20} strokeWidth={1.6} /> },
  { name: "내보내기", icon: <Svg><path d="M2 2h9v9H2zM8 8h9v10H8z" strokeWidth="2" /><path d="M5 5h5v8l4-3v6H8z" fill="currentColor" /></Svg> },
  { name: "즐겨찾기", icon: <Svg><circle cx="10" cy="10" r="7.500" strokeWidth="2.500" /><path d="M10 3l2 5 5 2-5 2-2 5-2-5-5-2 5-2z" fill="#f5f5f5" /></Svg> },
];

const ToolStrip = () => (
  <div className="flex w-12 shrink-0 flex-col bg-[#f5f5f5] pl-[3px] text-[#bcbcbc]">
    <div className="ml-[3px] mt-1 h-2 border-t-2 border-dotted border-[#777]" />
    {TOOLS.map((tool) => (
      <div key={tool.name} className="flex h-[26px] items-center">
        <button aria-label={tool.name} className="flex h-full w-8 items-center justify-center">
          {tool.icon}
        </button>
        {tool.menu && <button aria-label="메뉴" className="ml-0.5"><Tri down /></button>}
      </div>
    ))}
    <div className="ml-[5px] mt-[3px] h-[9px] border-y border-[#999]" />
    <div className="pt-[5px]">
      {STUDY_TOOLS.map((tool) => (
        <button key={tool.name} aria-label={tool.name} className="flex h-[26px] w-8 items-center justify-center">
          {tool.icon}
        </button>
      ))}
    </div>
    <div className="mt-[7px] border-t border-[#888]" />
  </div>
);

export default function App() {
  return (
    <div className="flex h-screen overflow-hidden bg-[#b9d1ea] font-['Roboto','Noto_Sans_CJK_KR',sans-serif]">
      <div className="w-[7px] shrink-0 border-r border-[#7f8c99] bg-[linear-gradient(#b89aa0_0,#c9a9ae_12px,#cfe6f5_18px,#cfe4f6_158px,#a9c8ee_168px,#a9c6e8_100%)]" />
      <div className="flex min-w-0 flex-1 flex-col">
        <Ribbon />
        <div className="flex min-h-0 flex-1">
          <div className="flex min-w-0 flex-1 flex-col">
            <CommandTabs />
            <div className="flex min-h-0 flex-1">
              <PropertyManager />
              <Viewport />
            </div>
          </div>
          <ToolStrip />
        </div>
      </div>
      <div className="w-2 shrink-0 border-l border-[#5f7488] bg-[linear-gradient(#c3d9ee_0,#d5e4f2_130px,#86a9d0_165px,#5c86b6_175px,#7fa6cf_100%)]" />
    </div>
  );
}
